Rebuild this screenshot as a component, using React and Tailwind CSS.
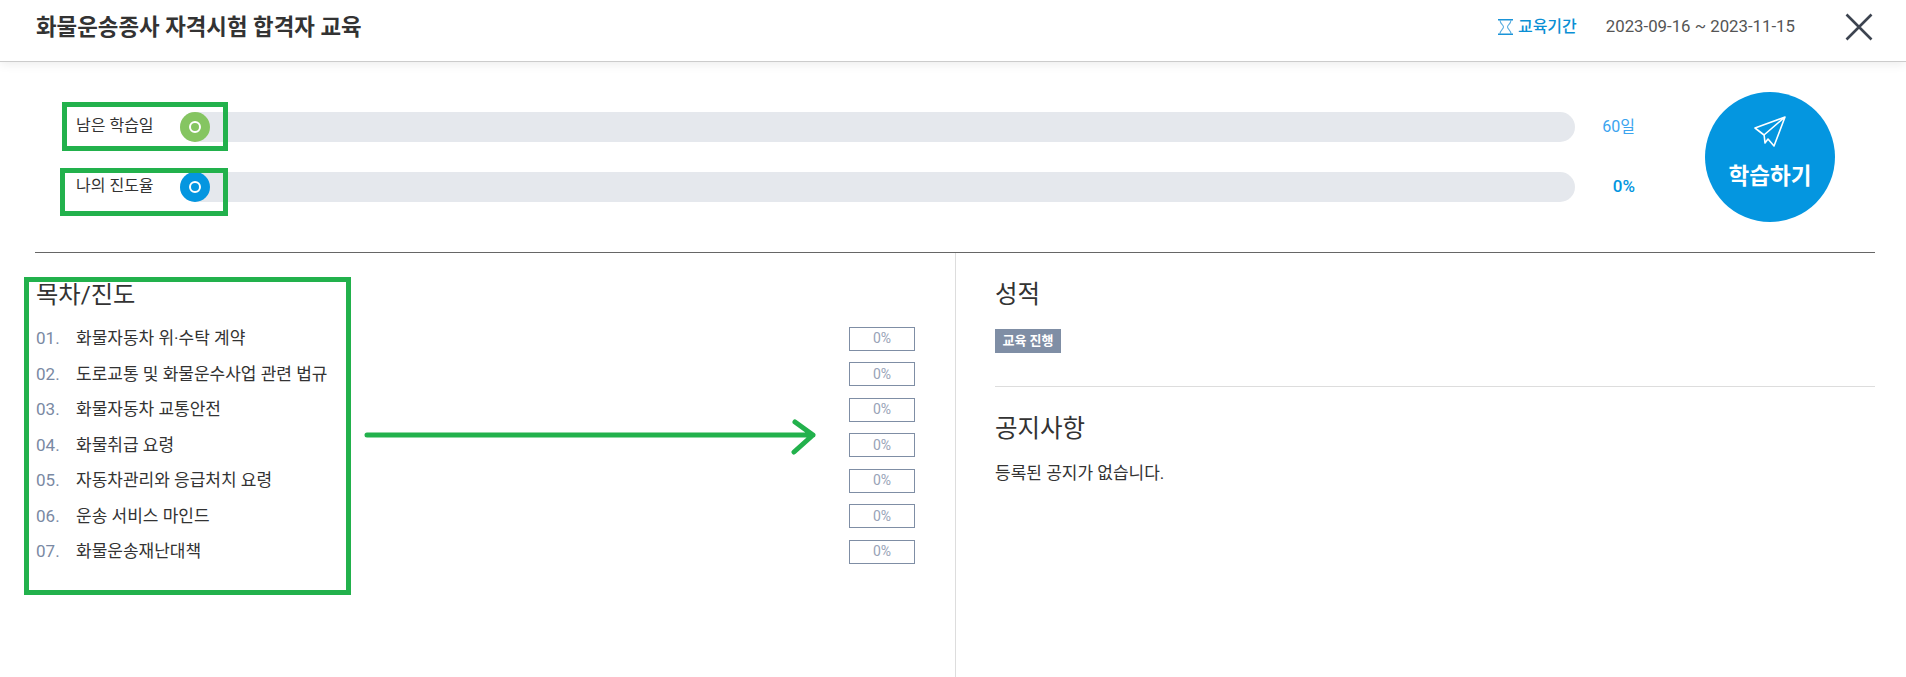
const lessons = [
  '화물자동차 위·수탁 계약',
  '도로교통 및 화물운수사업 관련 법규',
  '화물자동차 교통안전',
  '화물취급 요령',
  '자동차관리와 응급처치 요령',
  '운송 서비스 마인드',
  '화물운송재난대책',
]

function Hourglass() {
  return (
    <svg width="15" height="16" viewBox="0 0 15 16" fill="none" stroke="#1a94d8">
      <path d="M0 .7h15M0 15.3h15" strokeWidth="1.4" />
      <path d="M2 1c0 4 3.5 5 3.5 7S2 11 2 15M13 1c0 4-3.5 5-3.5 7s3.5 3 3.5 7" strokeWidth="1.1" stroke="#5aaee0" />
    </svg>
  )
}

function PaperPlane() {
  return (
    <svg width="32" height="32" viewBox="0 0 32 32" fill="none" stroke="#fff" strokeWidth="1.6" strokeLinejoin="round">
      <path d="M31 1 1 12l9 7 21-18-11 29-6-7-3 4-1-9" />
    </svg>
  )
}

function ProgressRow({ label, color, value, valueClass }) {
  return (
    <div className="flex items-center">
      <span className="w-[104px] text-[16px] text-[#333] -mt-[2px]">{label}</span>
      <div className="flex-1 h-[30px] rounded-full bg-[#e5e8ed]">
        <div className={`w-[30px] h-[30px] rounded-full flex items-center justify-center ${color}`}>
          <span className="w-[12px] h-[12px] rounded-full border-2 border-white"></span>
        </div>
      </div>
      <span className={`w-[60px] text-right ${valueClass}`}>{value}</span>
    </div>
  )
}

export default function App() {
  return (
    <div className="relative min-h-screen flex flex-col bg-white overflow-hidden font-['Roboto','Noto_Sans_CJK_KR',sans-serif]">
      <header className="h-[62px] flex items-center justify-between pl-[36px] pr-[33px] border-b border-[#ccc] shadow-[0_2px_10px_rgba(0,0,0,0.08)]">
        <h1 className="text-[22.4px] font-bold text-[#333] -mt-[6px]">화물운송종사 자격시험 합격자 교육</h1>
        <div className="flex items-center -mt-[8px]">
          <Hourglass />
          <span className="ml-[5px] text-[16px] font-medium text-[#0a8fd4]">교육기간</span>
          <span className="ml-[29px] text-[16.8px] text-[#555]">2023-09-16 ~ 2023-11-15</span>
          <svg className="ml-[50px]" width="28" height="28" viewBox="0 0 28 28" fill="none" stroke="#3d4450" strokeWidth="2.6">
            <path d="M1.5 1.5l25 25M26.5 1.5l-25 25" />
          </svg>
        </div>
      </header>

      <section className="flex items-center pl-[76px] pr-[71px] pt-[30px] pb-[30px]">
        <div className="flex-1 flex flex-col gap-[30px]">
          <ProgressRow label="남은 학습일" color="bg-[#85c561]" value="60일" valueClass="text-[16px] text-[#3ba4ef]" />
          <ProgressRow label="나의 진도율" color="bg-[#0496e0]" value="0%" valueClass="text-[17px] text-[#0496e0] font-medium" />
        </div>
        <button className="ml-[70px] w-[130px] h-[130px] rounded-full bg-[#0496e0] flex flex-col items-center pt-[24px] text-white">
          <PaperPlane />
          <span className="mt-[14px] text-[22.5px] font-bold leading-[28px]">학습하기</span>
        </button>
      </section>

      <main className="flex-1 flex ml-[35px] mr-[31px] border-t border-[#666]">
        <div className="w-[921px] border-r border-[#ddd] pl-px pr-[40px] pt-[26px]">
          <h2 className="text-[24.3px] leading-[32px] text-[#333]">목차/진도</h2>
          <ul className="mt-[10px]">
            {lessons.map((title, i) => (
              <li key={title} className="h-[35.5px] flex items-center">
                <span className="w-[40px] text-[17px] text-[#7a89a3]">0{i + 1}.</span>
                <span className="flex-1 text-[17px] text-[#333]">{title}</span>
                <span className="w-[66px] h-[24px] flex items-center justify-center border border-[#7f8ea5] text-[14px] text-[#98a3b7]">0%</span>
              </li>
            ))}
          </ul>
        </div>
        <div className="flex-1 pl-[39px] pt-[26px]">
          <h2 className="text-[24.5px] leading-[32px] text-[#333]">성적</h2>
          <span className="mt-[18px] block w-[66px] h-[24px] bg-[#7f8ea5] text-center text-[13px] leading-[24px] font-bold text-white">교육 진행</span>
          <div className="mt-[33px] pt-[26px] border-t border-[#ddd]">
            <h2 className="text-[24.5px] leading-[32px] text-[#333]">공지사항</h2>
            <p className="mt-[16px] text-[17px] leading-[24px] text-[#333]">등록된 공지가 없습니다.</p>
          </div>
        </div>
      </main>

      {/* 스크린샷에 덧그린 표시 */}
      <div className="absolute left-[62px] top-[102px] w-[166px] h-[49px] border-[5px] border-[#22b14c]"></div>
      <div className="absolute left-[60px] top-[168px] w-[168px] h-[48px] border-[5px] border-[#22b14c]"></div>
      <div className="absolute left-[24px] top-[277px] w-[327px] h-[318px] border-[5px] border-[#22b14c]"></div>
      <svg className="absolute left-[361px] top-[415px]" width="460" height="42" viewBox="0 0 460 42" fill="none" stroke="#22b14c" strokeWidth="5" strokeLinecap="round" strokeLinejoin="round">
        <path d="M6 20h446M434 7l18 13-19 17" />
      </svg>
    </div>
  )
}
